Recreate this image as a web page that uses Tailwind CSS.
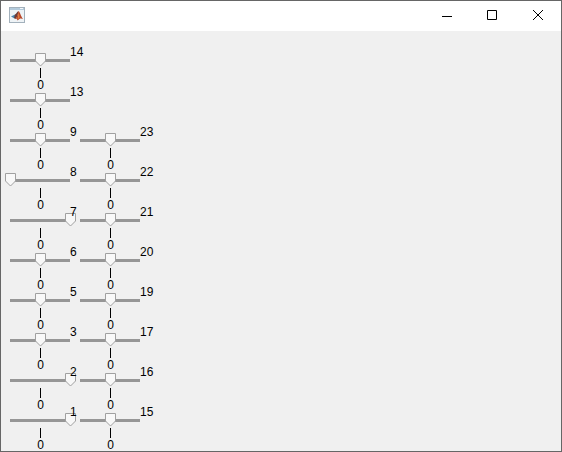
<!DOCTYPE html>
<html lang="en">
<head>
  <meta charset="UTF-8" />
  <meta name="viewport" content="width=device-width, initial-scale=1" />
  <title>Figure</title>
  <script src="https://cdn.jsdelivr.net/npm/@tailwindcss/browser@4"></script>
  <style>
    /* pentagon shaped slider handle */
    .slider::-webkit-slider-thumb {
      -webkit-appearance: none;
      width: 11px;
      height: 14px;
      background: url("data:image/svg+xml,%3Csvg xmlns='http://www.w3.org/2000/svg' width='11' height='14'%3E%3Cpath d='M.5 .5h10v7.500l-5 5l-5-5z' fill='%23f8f8f8' stroke='%23a0a0a0'/%3E%3C/svg%3E") no-repeat;
    }
  </style>
</head>
<body class="bg-[#f0f0f0] text-black font-['Liberation_Sans',Arial,sans-serif]">
  <div class="flex min-h-screen flex-col overflow-hidden border border-[#666666]">
    <header class="flex h-[30px] items-stretch justify-between bg-white">
      <div class="pl-2 pt-1.5">
        <svg class="block h-4 w-4" viewBox="0 0 16 16" role="img" aria-label="MATLAB">
          <rect x="0.5" y="0.5" width="15" height="15" fill="#eef3f6" stroke="#a3b1bc" />
          <path d="M1 1h14v2H1z" fill="#b4cbdc" />
          <path d="M11 1.500h3" stroke="#f4f7fa" />
          <path d="M2 9.500L6 7.500L7.500 9.500L5.500 11.500z" fill="#4a86b0" />
          <path d="M6 7.500C7.500 7 8 4.500 9.500 4L8.500 9L6.500 12L5 11z" fill="#6c3a35" />
          <path d="M9.500 4C11 5 12 9.500 14 12C12 11 11 11 8.500 13.500C8 12 7.500 11.500 6.500 11.500C8.500 10 8.800 6 9.500 4z" fill="#b9482a" />
          <path d="M9.500 5.500C10.200 7 10.400 9 10.500 11C9.800 11 9 12 8.500 13z" fill="#e08242" />
        </svg>
      </div>
      <div class="flex">
        <button type="button" aria-label="Minimize" class="flex w-[46px] items-center justify-center hover:bg-gray-200">
          <svg class="h-3 w-3" viewBox="0 0 12 12" fill="none" stroke="#000"><path d="M2 6.500h10" /></svg>
        </button>
        <button type="button" aria-label="Maximize" class="flex w-[46px] items-center justify-center hover:bg-gray-200">
          <svg class="h-3 w-3" viewBox="0 0 12 12" fill="none" stroke="#000"><path d="M1.500 0.500h9v9h-9z" /></svg>
        </button>
        <button type="button" aria-label="Close" class="flex w-[46px] items-center justify-center hover:bg-red-500">
          <svg class="h-3 w-3" viewBox="0 0 12 12" fill="none" stroke="#000"><path d="M1 0l10 10M11 0l-10 10" /></svg>
        </button>
      </div>
    </header>

    <main class="flex flex-1 items-start pl-1 pt-[14px]">
      <div id="left" class="w-[70px]"></div>
      <div id="right" class="w-[70px] pt-20"></div>
    </main>
  </div>

  <script>
    // [channel, value], top to bottom
    const left = [[14, 0], [13, 0], [9, 0], [8, -1], [7, 1], [6, 0], [5, 0], [3, 0], [2, 1], [1, 1]];
    const right = [[23, 0], [22, 0], [21, 0], [20, 0], [19, 0], [17, 0], [16, 0], [15, 0]];

    function renderSliders(id, items) {
      document.getElementById(id).innerHTML = items.map(([n, value]) => `
        <div class="relative h-10 pt-2 text-[12px] leading-[14px]">
          <input type="range" id="ch-${n}" min="-1" max="1" step="0.01" value="${value}"
            class="slider block h-[14px] w-[71px] appearance-none bg-[linear-gradient(#969696,#969696)] bg-[length:60px_3px] bg-[position:5px_6px] bg-no-repeat" />
          <div class="w-[71px] pt-px text-center">
            <div class="mx-auto h-[10px] w-px bg-black"></div>
            0
          </div>
          <label for="ch-${n}" class="absolute left-[65px] top-0 z-10">${n}</label>
        </div>
      `).join('');
    }

    renderSliders('left', left);
    renderSliders('right', right);
  </script>
</body>
</html>
